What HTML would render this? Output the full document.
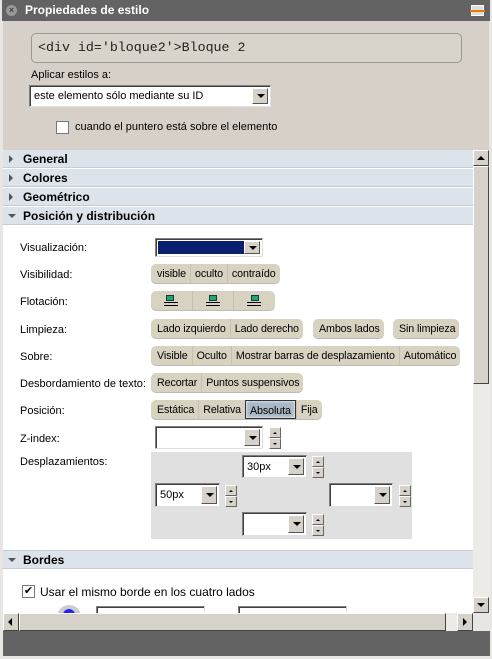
<!DOCTYPE html>
<html><head><meta charset="utf-8"><style>
*{box-sizing:border-box;margin:0;padding:0}
body{width:492px;height:659px;background:#e8e6e2;font-family:"Liberation Sans",sans-serif;font-size:11px;color:#000;position:relative;overflow:hidden}
.a{position:absolute}
.t{position:absolute;white-space:nowrap}
.sel{position:absolute;background:#fff;border:1px solid #7f7f7f;border-right-color:#e0e0e0;border-bottom-color:#e0e0e0;box-shadow:inset 1px 1px 0 #404040}
.arr{position:absolute;right:2px;top:2px;bottom:2px;width:16px;background:#d6d2ca;border:1px solid #fff;border-right-color:#555;border-bottom-color:#555}
.arr:after{content:"";position:absolute;left:4px;top:50%;margin-top:-2px;border-left:4px solid transparent;border-right:4px solid transparent;border-top:4px solid #000}
.grp{position:absolute;height:19px;background:#d8d2c0;border-radius:5px;display:flex;box-shadow:0 1px 0 #bbb;font-size:10.7px;letter-spacing:-0.1px}
.grp span{padding:0 4px;line-height:20px;border-left:1px solid #c6c0b0;white-space:nowrap}
.grp span:first-child{border-left:none;padding-left:6px}
.grp span:last-child{padding-right:4px}
.act{background:#a9b7c6;border:1px solid #333 !important;box-shadow:inset 0 0 3px #fff}
.spin{position:absolute;width:12px;height:22px}
.spin i{display:block;height:11px;background:#d6d2ca;border:1px solid #fff;border-right-color:#666;border-bottom-color:#666;position:relative}
.spin i:after{content:"";position:absolute;left:3px;top:4px;border-left:2px solid transparent;border-right:2px solid transparent}
.spin i.u:after{border-bottom:2px solid #000}
.spin i.d:after{border-top:2px solid #000}
.sec{position:absolute;left:3px;width:470px;height:18px;background:#dde3ea;border-bottom:1px solid #c8ccd0;font-weight:bold;font-size:12px;line-height:18px;padding-left:20px}
.tri{position:absolute;left:6px;top:5px;border-top:4px solid transparent;border-bottom:4px solid transparent;border-left:4px solid #555}
.trd{position:absolute;left:5px;top:7px;border-left:4px solid transparent;border-right:4px solid transparent;border-top:4px solid #555}
</style></head><body>
<div class="a" style="left:2px;top:0;width:488px;height:21px;background:#636363"></div>
<div class="a" style="left:6px;top:5px;width:11px;height:11px;border-radius:50%;background:#999;color:#444;font-size:9px;line-height:11px;text-align:center;font-weight:bold">×</div>
<div class="t" style="left:25px;top:3px;color:#fff;font-weight:bold;font-size:12px">Propiedades de estilo</div>
<div class="a" style="left:471px;top:5px;width:13px;height:11px;background:#ddd;border:1px solid #fff"><div class="a" style="left:-2px;top:4px;width:15px;height:2px;background:#f07800"></div></div>
<div class="a" style="left:3px;top:21px;width:486px;height:129px;background:#d6d0c8"></div>
<div class="a" style="left:31px;top:33px;width:431px;height:30px;border:1px solid #9a9894;border-radius:5px;background:#d8d3cb"></div>
<div class="t" style="left:38px;top:40px;font-family:'Liberation Mono',monospace;font-size:13.3px;color:#222">&lt;div id='bloque2'&gt;Bloque 2</div>
<div class="t" style="left:31px;top:69px">Aplicar estilos a:</div>
<div class="sel" style="left:29px;top:85px;width:242px;height:22px"><div class="t" style="left:4px;top:4px">este elemento sólo mediante su ID</div><div class="arr"></div></div>
<div class="a" style="left:56px;top:121px;width:13px;height:13px;background:#fff;border:1px solid #777"></div>
<div class="t" style="left:75px;top:121px">cuando el puntero está sobre el elemento</div>
<div class="a" style="left:3px;top:150px;width:470px;height:463px;background:#fff"></div>
<div class="sec" style="top:150px"><i class="tri"></i>General</div>
<div class="sec" style="top:169px"><i class="tri"></i>Colores</div>
<div class="sec" style="top:188px"><i class="tri"></i>Geométrico</div>
<div class="sec" style="top:207px"><i class="trd"></i>Posición y distribución</div>

<div class="t" style="left:20px;top:242px">Visualización:</div>
<div class="sel" style="left:155px;top:238px;width:108px;height:19px"><div class="a" style="left:2px;top:2px;width:88px;height:13px;background:#0a1f6e"></div><div class="arr"></div></div>
<div class="t" style="left:20px;top:269px">Visibilidad:</div>
<div class="grp" style="left:151px;top:264px"><span>visible</span><span>oculto</span><span>contraído</span></div>
<div class="t" style="left:20px;top:296px">Flotación:</div>
<div class="grp" style="left:151px;top:291px;width:124px">
<span style="width:41px;position:relative"><i class="a" style="left:15px;top:4px;width:8px;height:6px;background:#2a5;border:1px solid #136"></i><i class="a" style="left:13px;top:11px;width:14px;height:4px;border-top:1px solid #000;border-bottom:1px solid #000"></i></span>
<span style="width:41px;position:relative"><i class="a" style="left:16px;top:4px;width:8px;height:6px;background:#2a5;border:1px solid #136"></i><i class="a" style="left:13px;top:11px;width:14px;height:4px;border-top:1px solid #000;border-bottom:1px solid #000"></i></span>
<span style="width:41px;position:relative"><i class="a" style="left:17px;top:4px;width:8px;height:6px;background:#2a5;border:1px solid #136"></i><i class="a" style="left:13px;top:11px;width:14px;height:4px;border-top:1px solid #000;border-bottom:1px solid #000"></i></span></div>
<div class="t" style="left:20px;top:324px">Limpieza:</div>
<div class="grp" style="left:151px;top:319px"><span>Lado izquierdo</span><span>Lado derecho</span></div>
<div class="grp" style="left:313px;top:319px"><span>Ambos lados</span></div>
<div class="grp" style="left:393px;top:319px"><span>Sin limpieza</span></div>
<div class="t" style="left:20px;top:351px">Sobre:</div>
<div class="grp" style="left:151px;top:346px"><span>Visible</span><span>Oculto</span><span>Mostrar barras de desplazamiento</span><span>Automático</span></div>
<div class="t" style="left:20px;top:378px">Desbordamiento de texto:</div>
<div class="grp" style="left:151px;top:373px"><span>Recortar</span><span>Puntos suspensivos</span></div>
<div class="t" style="left:20px;top:405px">Posición:</div>
<div class="grp" style="left:151px;top:400px"><span>Estática</span><span>Relativa</span><span class="act">Absoluta</span><span>Fija</span></div>
<div class="t" style="left:20px;top:433px">Z-index:</div>
<div class="sel" style="left:155px;top:426px;width:108px;height:23px"><div class="arr"></div></div>
<div class="spin" style="left:269px;top:427px"><i class="u"></i><i class="d"></i></div>
<div class="t" style="left:20px;top:456px">Desplazamientos:</div>
<div class="a" style="left:151px;top:452px;width:261px;height:87px;background:#e0e0e0"></div>
<div class="sel" style="left:242px;top:455px;width:65px;height:23px"><div class="t" style="left:4px;top:5px">30px</div><div class="arr"></div></div>
<div class="spin" style="left:312px;top:456px"><i class="u"></i><i class="d"></i></div>
<div class="sel" style="left:155px;top:483px;width:65px;height:24px"><div class="t" style="left:4px;top:5px">50px</div><div class="arr"></div></div>
<div class="spin" style="left:225px;top:485px"><i class="u"></i><i class="d"></i></div>
<div class="sel" style="left:329px;top:483px;width:64px;height:24px"><div class="arr"></div></div>
<div class="spin" style="left:399px;top:485px"><i class="u"></i><i class="d"></i></div>
<div class="sel" style="left:242px;top:512px;width:65px;height:24px"><div class="arr"></div></div>
<div class="spin" style="left:312px;top:514px"><i class="u"></i><i class="d"></i></div>
<div class="sec" style="top:550px;border-top:1px solid #c8ccd0;height:19px"><i class="trd"></i>Bordes</div>
<div class="a" style="left:22px;top:585px;width:13px;height:13px;background:#fff;border:1px solid #777;font-size:11px;line-height:11px;text-align:center">✔</div>
<div class="t" style="left:40px;top:585px;font-size:12px">Usar el mismo borde en los cuatro lados</div>
<div class="a" style="left:57px;top:605px;width:24px;height:14px;border-radius:12px 12px 0 0;background:#ccc"><i class="a" style="left:6px;top:4px;width:12px;height:10px;border-radius:6px 6px 0 0;background:#22f"></i></div>
<div class="sel" style="left:96px;top:606px;width:109px;height:10px"></div>
<div class="sel" style="left:238px;top:606px;width:109px;height:10px"></div>
<div class="a" style="left:473px;top:150px;width:17px;height:463px;background:#ecebe7"></div>
<div class="a" style="left:473px;top:150px;width:16px;height:16px;background:#d6d2ca;border:1px solid #fff;border-right-color:#444;border-bottom-color:#444"><i class="a" style="left:3px;top:5px;border-left:4px solid transparent;border-right:4px solid transparent;border-bottom:4px solid #000"></i></div>
<div class="a" style="left:473px;top:166px;width:16px;height:218px;background:#d6d2ca;border:1px solid #fff;border-right-color:#444;border-bottom-color:#444"></div>
<div class="a" style="left:473px;top:597px;width:16px;height:16px;background:#d6d2ca;border:1px solid #fff;border-right-color:#444;border-bottom-color:#444"><i class="a" style="left:3px;top:5px;border-left:4px solid transparent;border-right:4px solid transparent;border-top:4px solid #000"></i></div>
<div class="a" style="left:3px;top:613px;width:470px;height:18px;background:#ecebe7"></div>
<div class="a" style="left:3px;top:613px;width:16px;height:18px;background:#d6d2ca;border:1px solid #fff;border-right-color:#444;border-bottom-color:#444"><i class="a" style="left:4px;top:4px;border-top:4px solid transparent;border-bottom:4px solid transparent;border-right:4px solid #000"></i></div>
<div class="a" style="left:19px;top:613px;width:427px;height:18px;background:#d6d2ca;border:1px solid #fff;border-right-color:#444;border-bottom-color:#444"></div>
<div class="a" style="left:457px;top:613px;width:16px;height:18px;background:#d6d2ca;border:1px solid #fff;border-right-color:#444;border-bottom-color:#444"><i class="a" style="left:5px;top:4px;border-top:4px solid transparent;border-bottom:4px solid transparent;border-left:4px solid #000"></i></div>
<div class="a" style="left:3px;top:631px;width:487px;height:25px;background:#636363"></div>
</body></html>
